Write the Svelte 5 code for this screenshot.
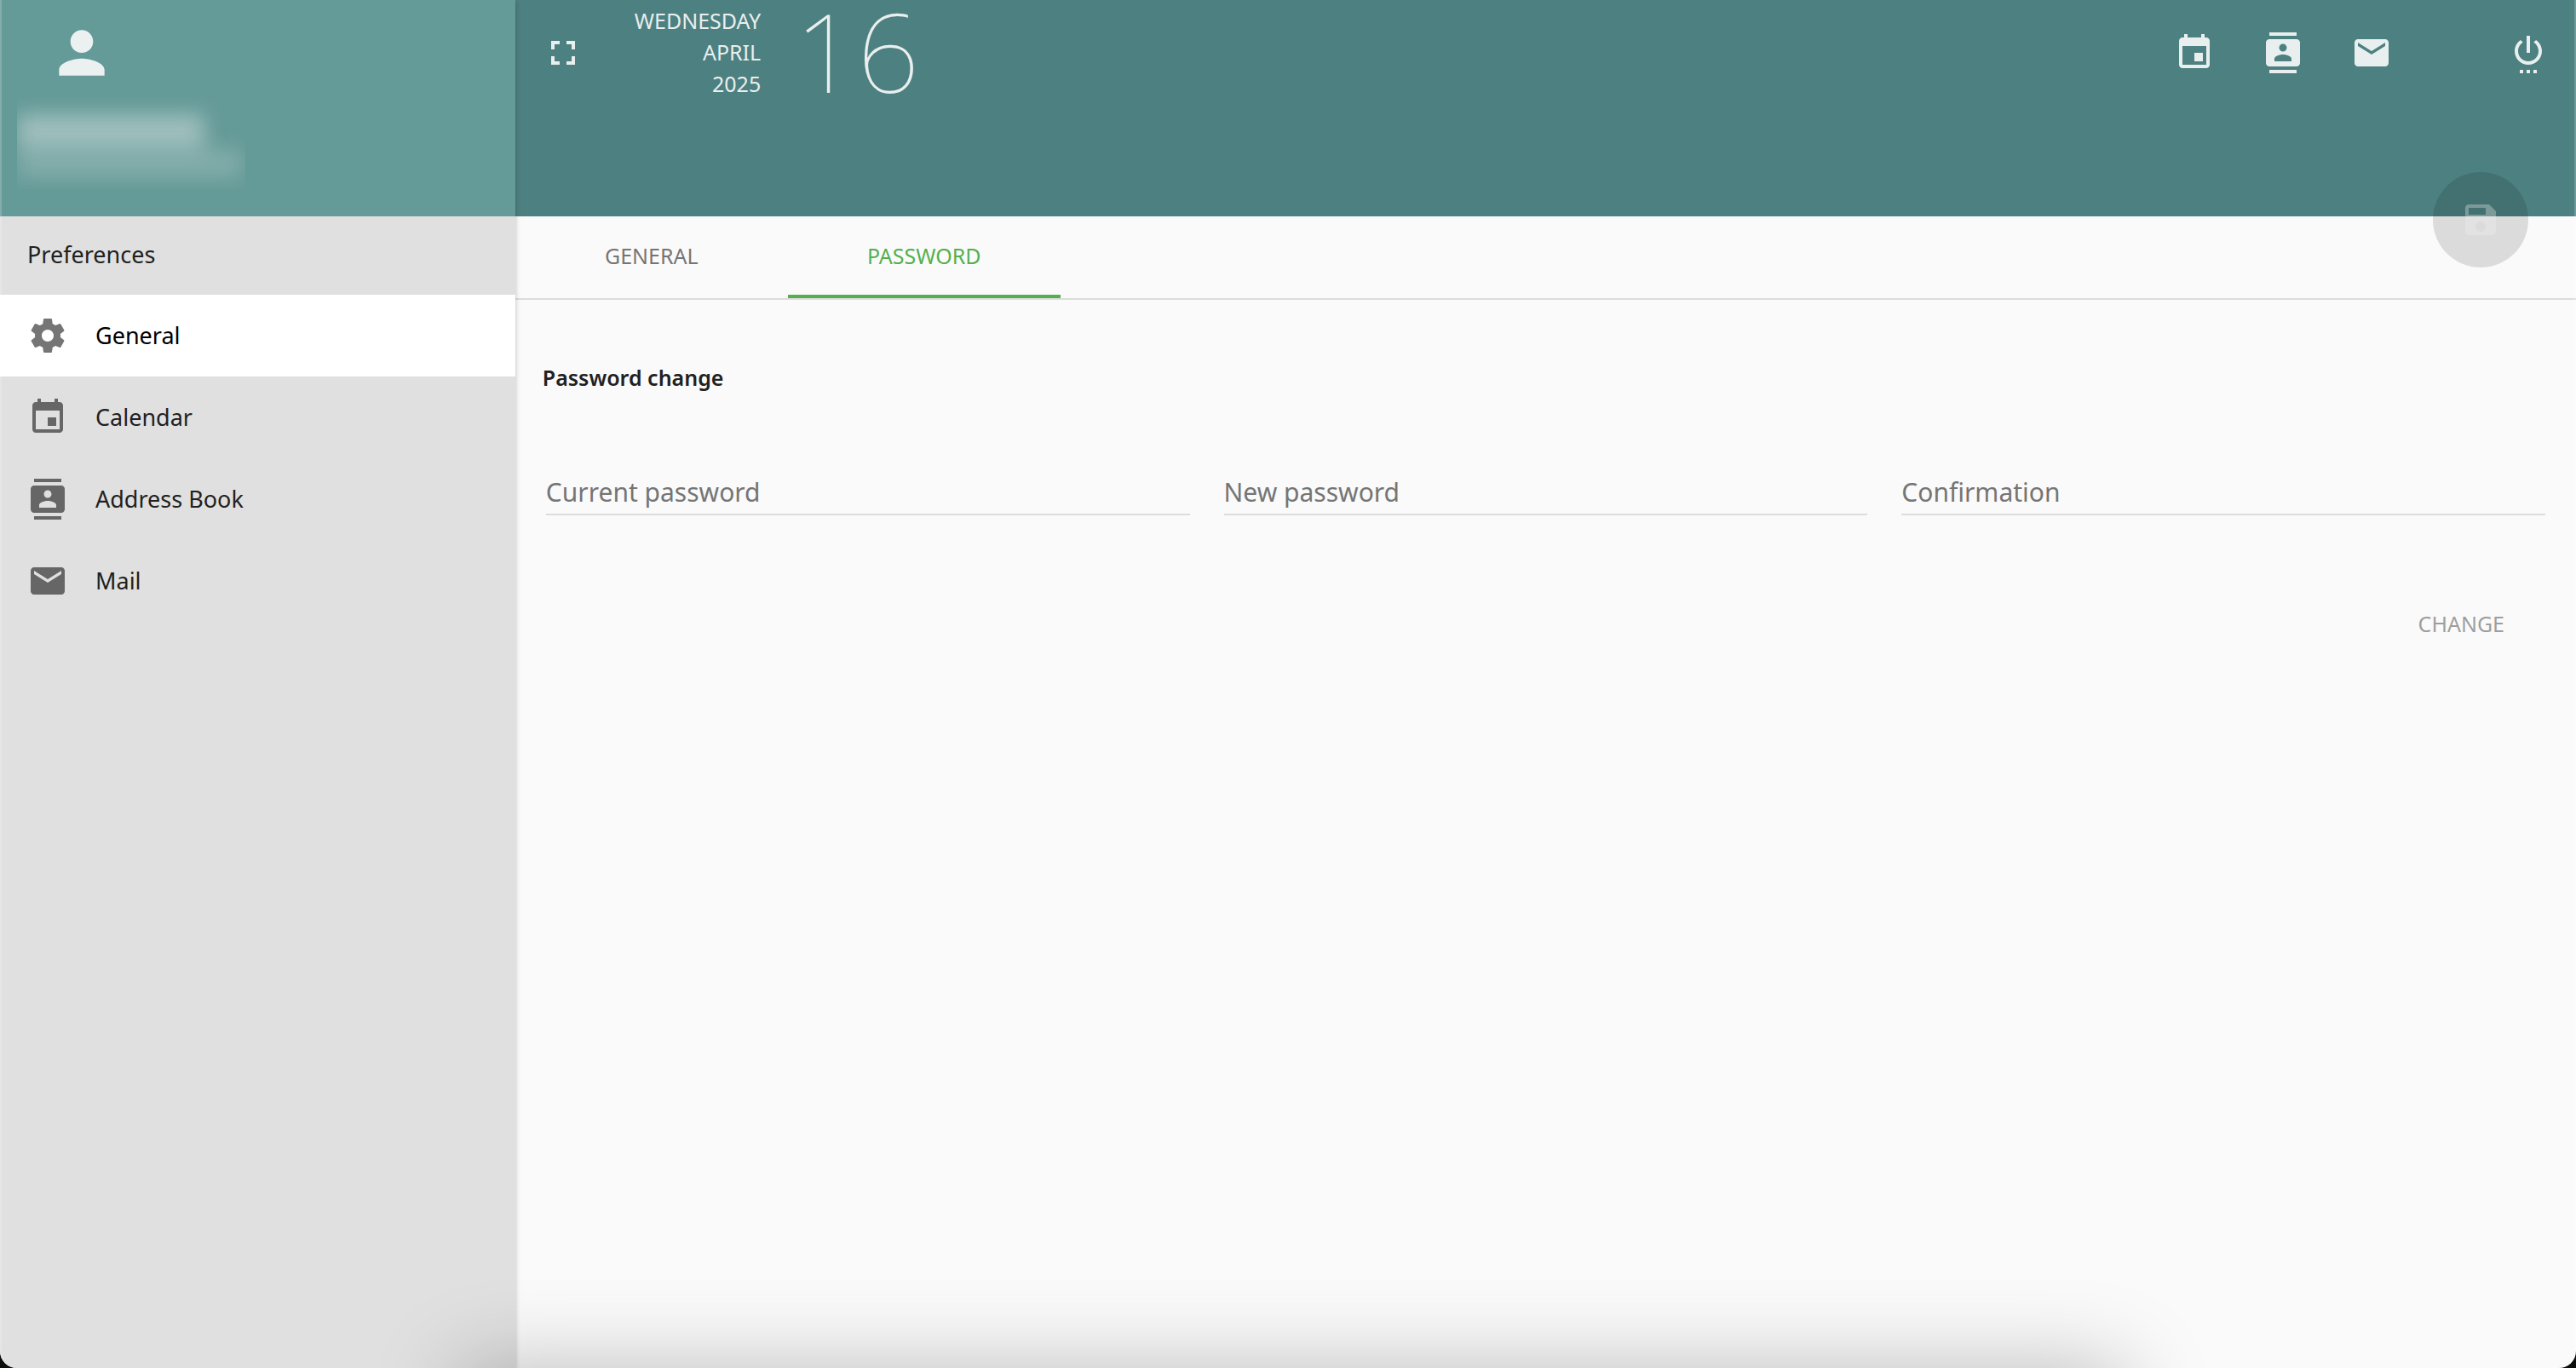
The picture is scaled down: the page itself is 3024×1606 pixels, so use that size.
<script>
  const icons = {
    person: 'M12 12c2.21 0 4-1.79 4-4s-1.79-4-4-4-4 1.79-4 4 1.79 4 4 4zm0 2c-2.67 0-8 1.34-8 4v2h16v-2c0-2.66-5.33-4-8-4z',
    fullscreen: 'M7 14H5v5h5v-2H7v-3zm-2-4h2V7h3V5H5v5zm12 7h-3v2h5v-5h-2v3zM14 5v2h3v3h2V5h-5z',
    event: 'M17 12h-5v5h5v-5zM16 1v2H8V1H6v2H5c-1.11 0-1.99.9-1.99 2L3 19c0 1.1.89 2 2 2h14c1.1 0 2-.9 2-2V5c0-1.1-.9-2-2-2h-1V1h-2zm3 18H5V8h14v11z',
    contacts: 'M20 0H4v2h16V0zM4 24h16v-2H4v2zM20 4H4c-1.1 0-2 .9-2 2v12c0 1.1.9 2 2 2h16c1.1 0 2-.9 2-2V6c0-1.1-.9-2-2-2zm-8 2.75c1.24 0 2.25 1.01 2.25 2.25s-1.01 2.25-2.25 2.25S9.75 10.24 9.75 9 10.76 6.75 12 6.75zM17 17H7v-1.5c0-1.67 3.33-2.5 5-2.5s5 .83 5 2.5V17z',
    mail: 'M20 4H4c-1.1 0-1.99.9-1.99 2L2 18c0 1.1.9 2 2 2h16c1.1 0 2-.9 2-2V6c0-1.1-.9-2-2-2zm0 4l-8 5-8-5V6l8 5 8-5v2z',
    power: 'M7 24h2v-2H7v2zm4 0h2v-2h-2v2zm2-22h-2v10h2V2zm3.56 2.44l-1.45 1.45C16.84 6.94 18 8.83 18 11c0 3.31-2.69 6-6 6s-6-2.69-6-6c0-2.17 1.16-4.06 2.88-5.12L7.44 4.44C5.36 5.88 4 8.28 4 11c0 4.42 3.58 8 8 8s8-3.58 8-8c0-2.72-1.36-5.12-3.44-6.56zM15 24h2v-2h-2v2z',
    save: 'M17 3H5c-1.11 0-2 .9-2 2v14c0 1.1.89 2 2 2h14c1.1 0 2-.9 2-2V7l-4-4zm-5 16c-1.66 0-3-1.34-3-3s1.34-3 3-3 3 1.34 3 3-1.34 3-3 3zm3-10H5V5h10v4z',
    settings: 'M19.43 12.98c.04-.32.07-.64.07-.98s-.03-.66-.07-.98l2.11-1.65c.19-.15.24-.42.12-.64l-2-3.46c-.12-.22-.39-.3-.61-.22l-2.49 1c-.52-.4-1.08-.73-1.69-.98l-.38-2.65C14.46 2.18 14.25 2 14 2h-4c-.25 0-.46.18-.49.42l-.38 2.65c-.61.25-1.17.59-1.69.98l-2.49-1c-.23-.09-.49 0-.61.22l-2 3.46c-.13.22-.07.49.12.64l2.11 1.65c-.04.32-.07.65-.07.98s.03.66.07.98l-2.11 1.65c-.19.15-.24.42-.12.64l2 3.46c.12.22.39.3.61.22l2.49-1c.52.4 1.08.73 1.69.98l.38 2.65c.03.24.24.42.49.42h4c.25 0 .46-.18.49-.42l.38-2.65c.61-.25 1.17-.59 1.69-.98l2.49 1c.23.09.49 0 .61-.22l2-3.46c.12-.22.07-.49-.12-.64l-2.11-1.65zM12 15.5c-1.93 0-3.5-1.57-3.5-3.5s1.57-3.5 3.5-3.5 3.5 1.57 3.5 3.5-1.57 3.5-3.5 3.5z'
  };

  const sections = [
    { label: 'General', icon: 'settings' },
    { label: 'Calendar', icon: 'event' },
    { label: 'Address Book', icon: 'contacts' },
    { label: 'Mail', icon: 'mail' }
  ];
  const modules = [
    { label: 'Calendar', icon: 'event' },
    { label: 'Address Book', icon: 'contacts' },
    { label: 'Mail', icon: 'mail' }
  ];
  const tabs = ['General', 'Password'];
  const fields = [
    { id: 'current', label: 'Current password' },
    { id: 'new', label: 'New password' },
    { id: 'confirm', label: 'Confirmation' }
  ];

  let section = $state('General');
  let tab = $state('Password');
  let values = $state({ current: '', new: '', confirm: '' });
  let canChange = $derived(values.current !== '' && values.new !== '' && values.new === values.confirm);
</script>

{#snippet icon(name)}
  <svg class="icon" viewBox="0 0 24 24" aria-hidden="true"><path d={icons[name]} /></svg>
{/snippet}

<div class="window">
  <aside class="sidebar">
    <div class="profile">
      <span class="avatar">{@render icon('person')}</span>
      <div class="redacted" aria-hidden="true">
        <span class="smudge name"></span>
        <span class="smudge address"></span>
      </div>
    </div>
    <h2 class="side-title">Preferences</h2>
    <nav>
      {#each sections as s}
        <button class="side-item" class:selected={section === s.label} onclick={() => (section = s.label)}>
          {@render icon(s.icon)}
          <span>{s.label}</span>
        </button>
      {/each}
    </nav>
  </aside>

  <main class="main">
    <header class="topbar">
      <button class="tool" aria-label="Toggle full screen">{@render icon('fullscreen')}</button>
      <div class="date">
        <div class="date-words">
          <span>WEDNESDAY</span>
          <span>APRIL</span>
          <span>2025</span>
        </div>
        <div class="day">16</div>
      </div>
      <div class="modules">
        {#each modules as m}
          <a class="tool" href="#{m.icon}" aria-label={m.label}>{@render icon(m.icon)}</a>
        {/each}
      </div>
      <button class="tool" aria-label="Log out">{@render icon('power')}</button>
      <button class="save" aria-label="Save" disabled>{@render icon('save')}</button>
    </header>

    <div class="tabs" role="tablist">
      {#each tabs as t}
        <button class="tab" role="tab" aria-selected={tab === t} class:active={tab === t} onclick={() => (tab = t)}>{t}</button>
      {/each}
    </div>

    <form class="panel" onsubmit={(e) => e.preventDefault()}>
      <h1>Password change</h1>
      <div class="fields">
        {#each fields as f}
          <input id={f.id} type="password" aria-label={f.label} placeholder={f.label} bind:value={values[f.id]} />
        {/each}
      </div>
      <div class="actions">
        <button class="change" disabled={!canChange}>Change</button>
      </div>
    </form>
  </main>
  <div class="dock-shadow"></div>
</div>

<style>
  :global(body) {
    background: #0a0f0a;
  }
  .window {
    position: relative;
    display: flex;
    min-height: 100vh;
    overflow: hidden;
    border-radius: 0 0 20px 20px;
    background: #fafafa;
    color: #212121;
    font-family: 'Noto Sans', 'Open Sans', sans-serif;
    font-size: 27px;
    line-height: 36px;
  }
  .window::after {
    content: '';
    position: absolute;
    z-index: 3;
    inset: 0;
    border: solid rgba(255, 255, 255, 0.2);
    border-width: 0 2px;
    border-radius: 0 0 20px 20px;
    pointer-events: none;
  }
  button {
    padding: 0;
    border: 0;
    background: none;
    color: inherit;
    font: inherit;
    cursor: pointer;
  }
  button:disabled {
    cursor: default;
  }
  .icon {
    display: block;
    width: 48px;
    height: 48px;
    flex: none;
    fill: currentColor;
  }

  .sidebar {
    position: relative;
    z-index: 1;
    flex: 0 0 20%;
    background: #e0e0e0;
    box-shadow: 0 2px 6px rgba(0, 0, 0, 0.25);
  }
  .profile {
    box-sizing: border-box;
    height: 254px;
    padding: 22px 20px 0;
    background: #649a97;
  }
  .avatar {
    display: block;
    padding-left: 36px;
    color: #ebf1f1;
  }
  .avatar .icon {
    width: 80px;
    height: 80px;
  }
  .redacted {
    display: flex;
    flex-direction: column;
    box-sizing: border-box;
    width: 268px;
    height: 108px;
    margin-top: 12px;
    padding-top: 20px;
    overflow: hidden;
  }
  .smudge {
    filter: blur(12px);
  }
  .name {
    width: 220px;
    height: 40px;
    background: rgba(236, 240, 240, 0.44);
  }
  .address {
    width: 264px;
    height: 36px;
    background: rgba(236, 240, 240, 0.22);
  }
  .side-title {
    margin: 0;
    padding: 27px 32px 29px;
    font-size: 27px;
    font-weight: 400;
  }
  .side-item {
    display: flex;
    align-items: center;
    gap: 32px;
    width: 100%;
    height: 96px;
    padding: 0 32px;
    text-align: left;
  }
  .side-item .icon {
    color: #666;
  }
  .side-item.selected {
    background: #fff;
    color: #000;
  }
  .side-item.selected .icon {
    color: #757575;
  }

  .main {
    flex: 1;
    min-width: 0;
  }
  .topbar {
    position: relative;
    display: flex;
    align-items: flex-start;
    box-sizing: border-box;
    height: 254px;
    padding: 0 16px;
    background: #4d8080;
    color: #e9efee;
  }
  .tool {
    display: block;
    margin-top: 22px;
    padding: 16px;
    color: inherit;
  }
  .date {
    display: flex;
    gap: 40px;
    padding-left: 44px;
    font-size: 25px;
    line-height: 37px;
  }
  .date-words {
    display: flex;
    flex-direction: column;
    align-items: flex-end;
    padding-top: 6px;
  }
  .day {
    font-size: 128px;
    font-weight: 100;
    line-height: 120px;
  }
  .modules {
    display: flex;
    gap: 24px;
    margin-left: auto;
    margin-right: 104px;
  }
  .save {
    position: absolute;
    right: 56px;
    bottom: -60px;
    width: 112px;
    height: 112px;
    padding: 32px;
    border-radius: 50%;
    background: rgba(0, 0, 0, 0.12);
    color: rgba(240, 240, 240, 0.33);
  }

  .tabs {
    display: flex;
    border-bottom: 2px solid #dcdcdc;
  }
  .tab {
    width: 320px;
    height: 96px;
    border-bottom: 4px solid transparent;
    color: #757575;
    font-size: 25px;
    text-transform: uppercase;
  }
  .tab.active {
    border-color: #54b04c;
    color: #54b04c;
  }
  .panel {
    padding: 73px 36px 0 32px;
  }
  h1 {
    margin: 0;
    font-size: 25px;
    font-weight: 600;
    line-height: 36px;
  }
  .fields {
    display: grid;
    grid-template-columns: repeat(3, 1fr);
    gap: 40px;
    padding: 85px 0 0 4px;
  }
  input {
    box-sizing: border-box;
    min-width: 0;
    height: 59px;
    padding: 6px 0 0;
    border: 0;
    border-bottom: 2px solid #dcdcdc;
    border-radius: 0;
    background: none;
    color: inherit;
    font: inherit;
    font-size: 30px;
    outline: none;
  }
  input::placeholder {
    color: #757575;
    opacity: 1;
  }
  .actions {
    display: flex;
    justify-content: flex-end;
    padding: 91px 36px 0 0;
  }
  .change {
    height: 72px;
    padding: 0 12px;
    font-size: 25px;
    text-transform: uppercase;
  }
  .change:disabled {
    color: #9e9e9e;
  }
  .dock-shadow {
    position: absolute;
    z-index: 2;
    top: 100%;
    left: 540px;
    right: 530px;
    height: 160px;
    box-shadow: 0 0 100px rgba(0, 0, 0, 0.25);
    pointer-events: none;
  }
</style>
